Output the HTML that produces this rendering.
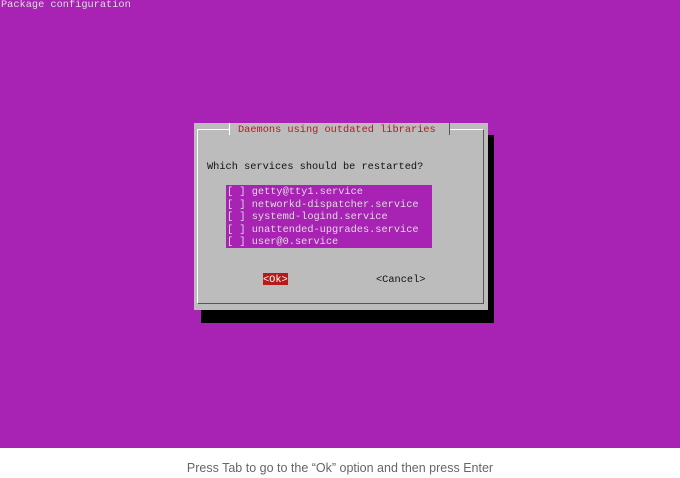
<!DOCTYPE html>
<html><head><style>
body{margin:0;width:680px;height:478px;background:#fff;position:relative;overflow:hidden}
.term{position:absolute;left:0;top:0;width:680px;height:448px;background:#a823b4;font-family:"Liberation Mono",monospace;font-size:10.3px;line-height:12.5px}
.t{position:absolute;white-space:pre}
.shadow{position:absolute;left:201px;top:135px;width:293px;height:188px;background:#000}
.dlg{position:absolute;left:194px;top:123px;width:294px;height:187px;background:#bcbcbc}
.inner{position:absolute;left:197px;top:129px;width:287px;height:175px;border:1px solid #555;border-top-color:#fff;border-left-color:#fff;box-sizing:border-box}
.list{position:absolute;left:226px;top:185px;width:206px;height:63px;background:#a823b4}
.cap{position:absolute;left:0;top:461px;width:680px;text-align:center;font-family:"Liberation Sans",sans-serif;font-size:12.5px;color:#666}
</style></head><body>
<div class="term">
<div class="t" style="left:1px;top:-1px;color:#ddd">Package configuration</div>
<div class="shadow"></div>
<div class="dlg"></div>
<div class="inner"></div>
<div class="t" style="left:229px;top:123px;width:219px;height:12px;background:#bcbcbc;border-left:1px solid #fff;border-right:1px solid #555"></div>
<div class="t" style="left:238px;top:124px;color:#b31c1c">Daemons using outdated libraries</div>
<div class="t" style="left:207px;top:161px;color:#111">Which services should be restarted?</div>
<div class="list"></div>
<div class="t" style="left:227px;top:186px;color:#ddd">[ ] getty@tty1.service
[ ] networkd-dispatcher.service
[ ] systemd-logind.service
[ ] unattended-upgrades.service
[ ] user@0.service</div>
<div class="t" style="left:263px;top:273px;width:25px;height:12px;background:#b41c1c"></div>
<div class="t" style="left:263px;top:274px;color:#fff">&lt;Ok&gt;</div>
<div class="t" style="left:376px;top:274px;color:#111">&lt;Cancel&gt;</div>
</div>
<div class="cap">Press Tab to go to the “Ok” option and then press Enter</div>
</body></html>
